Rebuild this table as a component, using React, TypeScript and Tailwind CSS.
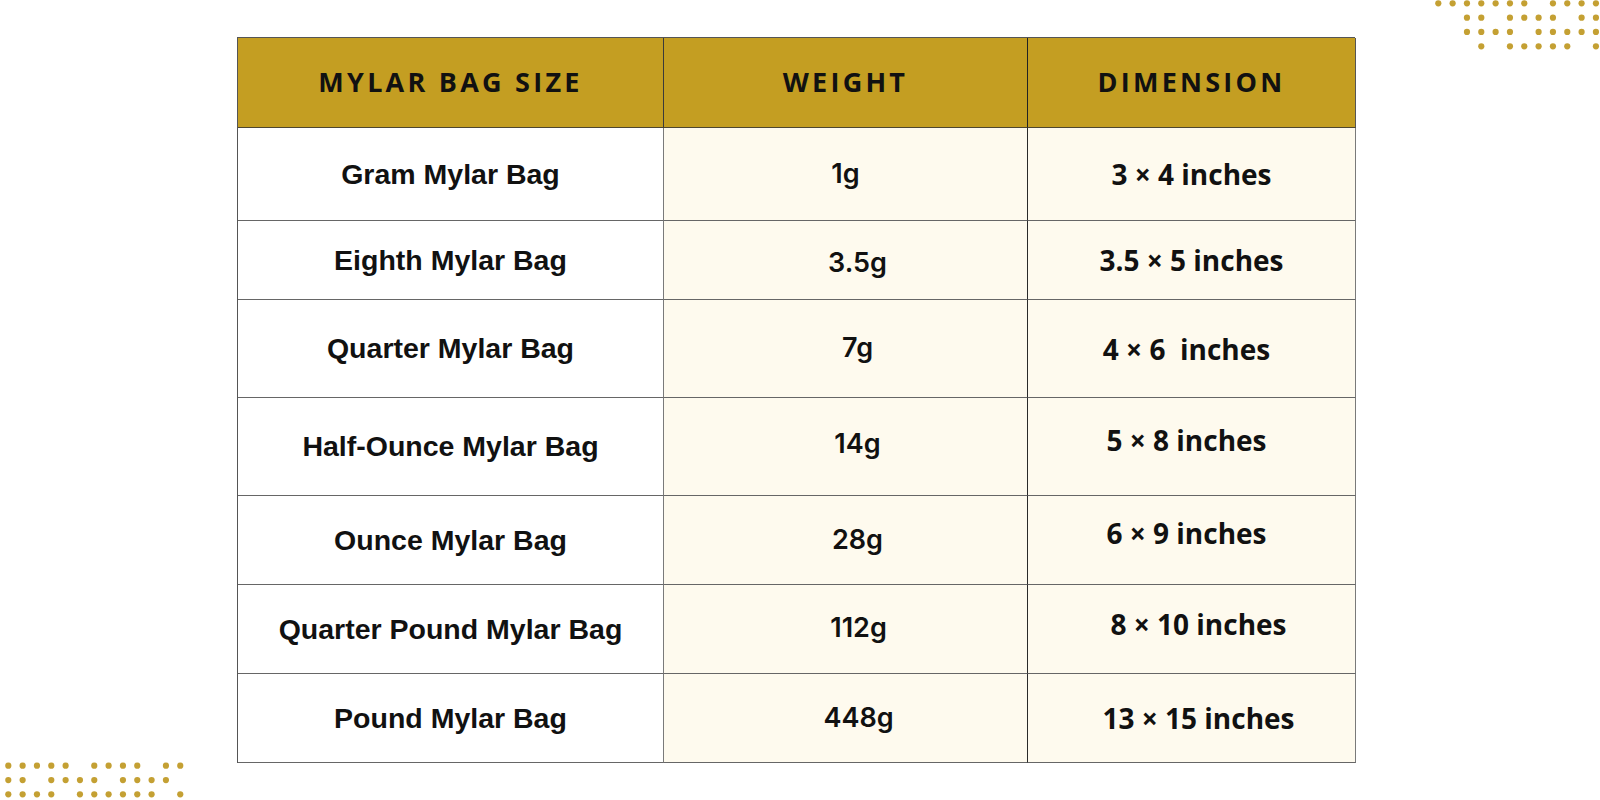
import React from "react";

const rows: { name: string; weight: string; dim: string; h: string; wCls: string; dimCls: string }[] = [
  { name: "Gram Mylar Bag", weight: "1g", dim: "3 × 4 inches", h: "h-[93px]", wCls: "", dimCls: "" },
  { name: "Eighth Mylar Bag", weight: "3.5g", dim: "3.5 × 5 inches", h: "h-[79px]", wCls: "pl-[24px] pt-[6px]", dimCls: "" },
  { name: "Quarter Mylar Bag", weight: "7g", dim: "4 × 6  inches", h: "h-[98px]", wCls: "pl-[24px]", dimCls: "pr-[10px]" },
  { name: "Half-Ounce Mylar Bag", weight: "14g", dim: "5 × 8 inches", h: "h-[98px]", wCls: "pl-[24px] pb-[4px]", dimCls: "pb-[14px] pr-[10px]" },
  { name: "Ounce Mylar Bag", weight: "28g", dim: "6 × 9 inches", h: "h-[89px]", wCls: "pl-[24px]", dimCls: "pb-[14px] pr-[10px]" },
  { name: "Quarter Pound Mylar Bag", weight: "112g", dim: "8 × 10 inches", h: "h-[89px]", wCls: "pl-[26px] pb-[2px]", dimCls: "pb-[10px] pl-[14px]" },
  { name: "Pound Mylar Bag", weight: "448g", dim: "13 × 15 inches", h: "h-[89px]", wCls: "pl-[26px]", dimCls: "pl-[14px]" },
];

const topDots: number[][] = [
  [0, 1, 2, 3, 4, 5, 6, 8, 9, 10, 11],
  [2, 3, 5, 6, 7, 8, 10, 11],
  [2, 3, 4, 5, 7, 8, 9, 10, 11],
  [3, 5, 6, 7, 8, 9, 11],
];

const bottomDots: number[][] = [
  [0, 1, 2, 3, 4, 6, 7, 8, 9, 11, 12],
  [0, 1, 3, 4, 5, 6, 8, 9, 10, 11],
  [0, 1, 2, 3, 5, 6, 7, 8, 9, 10, 12],
];

function Dots({ data, x0, y0 }: { data: number[][]; x0: number; y0: number }) {
  return (
    <>
      {data.map((row, r) =>
        row.map((k) => (
          <circle key={`${r}-${k}`} cx={x0 + k * 14.33} cy={y0 + r * 14.33} r={3.1} fill="#C4A033" />
        ))
      )}
    </>
  );
}

export default function App() {
  const headCls =
    "h-[90px] flex items-center justify-center bg-[#C49E22] text-[#111] font-['Open_Sans',sans-serif] font-bold text-[27px] tracking-[0.12em] border-b border-b-[#4d4630] border-r";
  return (
    <div className="relative w-[1600px] h-[800px] bg-white overflow-hidden">
      <svg className="absolute left-0 top-0 pointer-events-none" width="1600" height="800">
        <Dots data={topDots} x0={1438.3} y0={3.3} />
        <Dots data={bottomDots} x0={8.3} y0={765.7} />
      </svg>
      <div className="pl-[237px] pt-[37px]">
        <div className="grid grid-cols-[426px_364px_328px] w-[1118px] border-l border-t border-[#555]">
          <div className={`${headCls} border-r-[#3a3a3a]`}>MYLAR BAG SIZE</div>
          <div className={`${headCls} border-r-[#222]`}>WEIGHT</div>
          <div className={`${headCls} border-r-[#555]`}>DIMENSION</div>
          {rows.map((r, i) => (
            <React.Fragment key={i}>
              <div
                className={`${r.h} flex items-center justify-center bg-white border-r border-b border-r-[#7a7a7a] border-b-[#666] text-[28.5px] font-bold text-[#111] font-['Liberation_Sans',Arial,sans-serif]`}
              >
                {r.name}
              </div>
              <div
                className={`${r.h} flex items-center justify-center bg-[#FEFAEE] border-r border-b border-r-[#2a2a2a] border-b-[#666] text-[27px] font-semibold text-[#111] font-[Inter,sans-serif] ${r.wCls}`}
              >
                {r.weight}
              </div>
              <div
                className={`${r.h} flex items-center justify-center bg-[#FEFAEE] border-r border-b border-r-[#7a7a7a] border-b-[#666] text-[28px] font-bold text-[#111] whitespace-pre font-['Open_Sans',sans-serif] ${r.dimCls}`}
              >
                {r.dim}
              </div>
            </React.Fragment>
          ))}
        </div>
      </div>
    </div>
  );
}
